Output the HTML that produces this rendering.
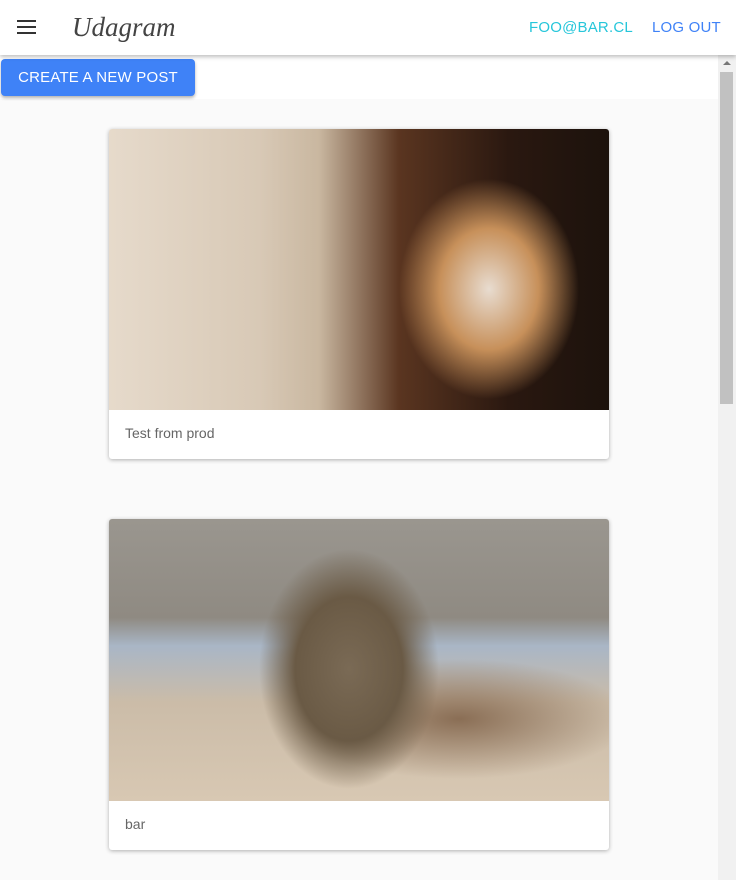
<!DOCTYPE html>
<html><head><style>
*{margin:0;padding:0;box-sizing:border-box}
body{width:736px;height:880px;overflow:hidden;background:#fafafa;font-family:"Liberation Sans",sans-serif;position:relative}
.hdr{position:absolute;left:0;top:0;width:736px;height:55px;background:#fff;box-shadow:0 2px 4px rgba(0,0,0,.25);z-index:3}
.logo{position:absolute;left:72px;top:12px;font-family:"Liberation Serif",serif;font-style:italic;font-size:27px;color:#444}
.nav{position:absolute;top:19px;font-size:15px;letter-spacing:.2px}
.band{position:absolute;left:0;top:55px;width:718px;height:44px;background:#fff}
.btn{position:absolute;left:1px;top:59px;width:194px;height:37px;background:#3f82f7;color:#fff;border-radius:4px;font-size:15px;letter-spacing:.2px;line-height:37px;text-align:center;box-shadow:0 2px 3px rgba(0,0,0,.3);z-index:2}
.sb{position:absolute;left:718px;top:55px;width:18px;height:825px;background:#f1f1f1}
.th{position:absolute;left:720px;top:72px;width:13px;height:332px;background:#c1c1c1}
.card{position:absolute;left:109px;width:500px;background:#fff;border-radius:3px;box-shadow:0 1px 4px rgba(0,0,0,.3);overflow:hidden}
.cap{font-size:14px;color:#666;padding:0 16px;height:49px;line-height:47px}
</style></head><body>
<div class="hdr">
<svg style="position:absolute;left:17px;top:19px" width="20" height="16"><rect y="1" width="19" height="2" fill="#333"/><rect y="7" width="19" height="2" fill="#333"/><rect y="13" width="19" height="2" fill="#333"/></svg>
<div class="logo">Udagram</div>
<div class="nav" style="left:529px;color:#26c6da">FOO@BAR.CL</div>
<div class="nav" style="left:652px;color:#3f82f7">LOG OUT</div>
</div>
<div class="band"></div>
<div class="btn">CREATE A NEW POST</div>
<div class="sb"><div style="position:absolute;left:5px;top:6px;border:4px solid transparent;border-bottom:4px solid #777;border-top:0"></div></div>
<div class="th"></div>
<div class="card" style="top:129px">
<div style="height:281px;background:
radial-gradient(ellipse 90px 110px at 380px 160px,#e8dcd0 0%,#c7905a 55%,rgba(80,40,20,0) 100%),
linear-gradient(90deg,#e6dacb 0%,#d8c9b6 30%,#c9b7a0 42%,#5a3520 58%,#2a1810 80%,#1c120c 100%)"></div>
<div class="cap">Test from prod</div>
</div>
<div class="card" style="top:519px">
<div style="height:282px;background:
radial-gradient(ellipse 90px 120px at 240px 150px,#7a6a55 0%,#6a5a45 60%,rgba(0,0,0,0) 100%),
radial-gradient(ellipse 170px 60px at 350px 200px,#8a6e55 0%,rgba(0,0,0,0) 100%),
linear-gradient(180deg,#9a968f 0%,#8f8a82 35%,#a9b6c6 45%,#cbbca8 65%,#d8c8b3 100%)"></div>
<div class="cap">bar</div>
</div>
</body></html>
